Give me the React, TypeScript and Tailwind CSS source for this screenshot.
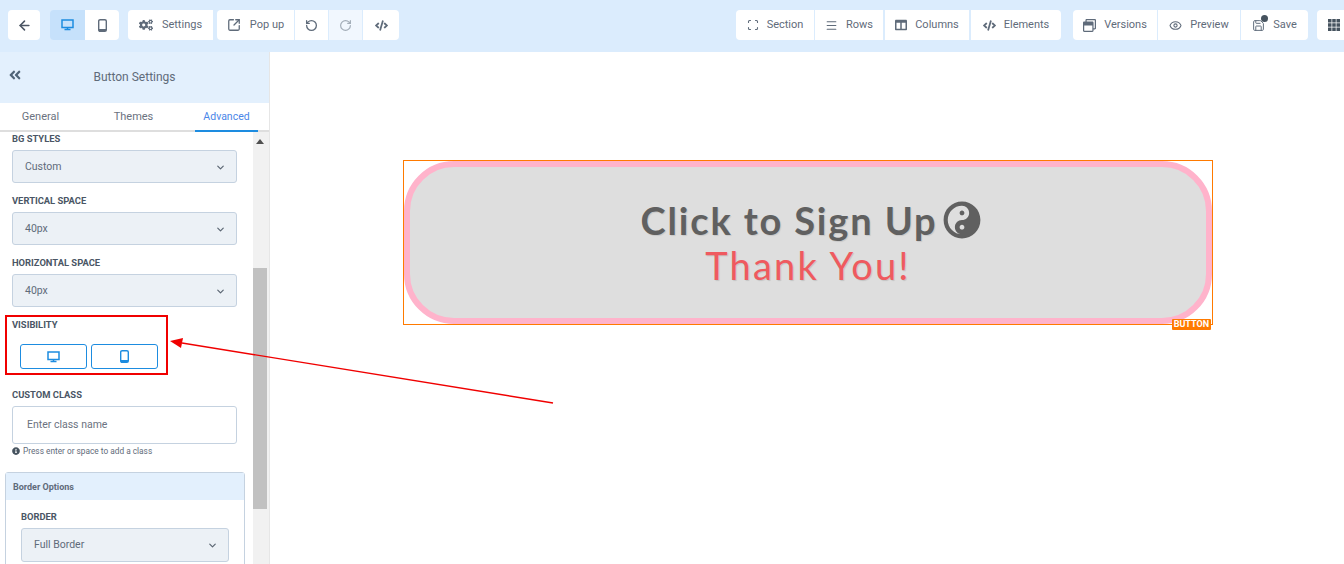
import type { ReactNode } from "react";
import { ArrowLeft, ChevronDown, Eye, Menu, RotateCcw, RotateCw, Save, Scan, SquareArrowOutUpRight } from "lucide-react";
import { FaAngleDoubleLeft, FaCode, FaCogs, FaColumns, FaInfoCircle, FaRegWindowRestore, FaYinYang } from "react-icons/fa";
import { TfiLayoutGrid3Alt } from "react-icons/tfi";

function DesktopIcon({ className = "" }: { className?: string }) {
  return (
    <svg width="13" height="12" viewBox="0 0 13 12" className={className}>
      <path d="M1 1h11v7.5H1z" fill="none" stroke="currentColor" strokeWidth="1.5" />
      <path d="M3.5 10.5h6M6.5 9v1.5" stroke="currentColor" strokeWidth="1.5" />
    </svg>
  );
}

function PhoneIcon({ className = "" }: { className?: string }) {
  return (
    <svg width="9" height="13" viewBox="0 0 9 13" className={className}>
      <rect x="0.7" y="0.7" width="7.6" height="11.6" rx="1.4" fill="none" stroke="currentColor" strokeWidth="1.4" />
      <path d="M1 10h7v2H1z" fill="currentColor" />
    </svg>
  );
}

function ToolButton({ icon, label, width, className = "" }: { icon: ReactNode; label?: string; width: string; className?: string }) {
  return (
    <div className={`flex h-[30px] shrink-0 items-center justify-center gap-[8px] bg-white text-[11px] text-[#5f6b7a] ${width} ${className}`}>
      {icon}
      {label && <span>{label}</span>}
    </div>
  );
}

function TopBar() {
  return (
    <header className="flex h-[52px] shrink-0 items-center overflow-hidden bg-[#dbecfd] pb-[2px] pl-2">
      <ToolButton width="w-[32px]" className="rounded" icon={<ArrowLeft size={15} strokeWidth={2.5} className="text-[#4b5563]" />} />
      <div className="ml-[10px] flex shrink-0 overflow-hidden rounded">
        <ToolButton width="w-[35px]" className="!bg-[#c6e1fb]" icon={<DesktopIcon className="text-[#1d8ce0]" />} />
        <ToolButton width="w-[34px]" icon={<PhoneIcon className="text-[#5f6b7a]" />} />
      </div>
      <ToolButton width="w-[85px]" className="ml-[9px] !gap-[9px] rounded-l" icon={<FaCogs size={14} className="text-[#5f6b7a]" />} label="Settings" />
      <div className="ml-[4px] flex shrink-0 gap-px">
        <ToolButton width="w-[77px]" className="!gap-[9px] rounded-l" icon={<SquareArrowOutUpRight size={14} strokeWidth={2.2} />} label="Pop up" />
        <ToolButton width="w-[33px]" icon={<RotateCcw size={13} strokeWidth={2.4} />} />
        <ToolButton width="w-[33px]" className="!bg-[#f1f7fe] !text-[#a3adb8]" icon={<RotateCw size={13} strokeWidth={2.2} />} />
        <ToolButton width="w-[36px]" className="rounded-r" icon={<FaCode size={13} />} />
      </div>
      <div className="ml-[337px] flex shrink-0 gap-px">
        <ToolButton width="w-[78px]" className="rounded-l" icon={<Scan size={12} strokeWidth={2.2} />} label="Section" />
        <ToolButton width="w-[68px]" icon={<Menu size={13} strokeWidth={2} />} label="Rows" />
        <ToolButton width="w-[84px]" className="ml-px" icon={<FaColumns size={12} />} label="Columns" />
        <ToolButton width="w-[90px]" className="ml-px rounded-r" icon={<FaCode size={13} />} label="Elements" />
      </div>
      <div className="ml-[12px] flex shrink-0 gap-px">
        <ToolButton width="w-[84px]" className="rounded-l" icon={<FaRegWindowRestore size={13} />} label="Versions" />
        <ToolButton width="w-[82px]" icon={<Eye size={13} strokeWidth={2} />} label="Preview" />
        <ToolButton
          width="w-[67px]"
          className="rounded-r"
          icon={
            <span className="relative flex">
              <Save size={13} strokeWidth={1.8} />
              <span className="absolute -right-[3px] -top-[4px] h-[7px] w-[7px] rounded-full bg-[#46535f]" />
            </span>
          }
          label="Save"
        />
      </div>
      <ToolButton width="w-[34px]" className="ml-[9px] rounded-l" icon={<TfiLayoutGrid3Alt size={12} className="text-[#46535f]" />} />
    </header>
  );
}

function FieldLabel({ children, className = "" }: { children: ReactNode; className?: string }) {
  return <p className={`text-[9.4px] font-bold uppercase leading-[12px] text-[#4a5665] ${className}`}>{children}</p>;
}

function SelectBox({ value, className = "" }: { value: string; className?: string }) {
  return (
    <div className={`flex h-[33px] items-center justify-between rounded-[3px] border border-[#c5d2e0] bg-[#ecf1f6] pl-[12px] pr-[10px] pt-px text-[10.5px] text-[#5f6b7a] ${className}`}>
      <span>{value}</span>
      <ChevronDown size={11} strokeWidth={2.6} className="text-[#5b6673]" />
    </div>
  );
}

function Scrollbar() {
  return (
    <div className="flex w-[16px] shrink-0 flex-col items-center bg-[#f1f1f1] pr-[2px]">
      <svg width="8" height="5" viewBox="0 0 8 5" className="mt-[7px]">
        <path d="M4 0 8 5H0Z" fill="#505050" />
      </svg>
      <div className="mt-[124px] h-[241px] w-[14px] bg-[#c1c1c1]" />
    </div>
  );
}

function Sidebar() {
  return (
    <aside className="flex h-full w-[270px] shrink-0 flex-col border-r border-[#e6e6e6]">
      <div className="relative flex h-[51px] shrink-0 items-center justify-center bg-[#e3f0fd] pb-[2px] text-[12px] text-[#5f6b7a]">
        <FaAngleDoubleLeft size={14} className="absolute left-[8px] top-[16px] text-[#4f6478]" />
        Button Settings
      </div>
      <nav className="flex h-[29px] shrink-0 border-b-2 border-[#dedede] text-[11px] text-[#6b7280]">
        <span className="flex w-[81px] items-center justify-center pt-[1px]">General</span>
        <span className="flex w-[105px] items-center justify-center pt-[1px]">Themes</span>
        <span className="-mb-[2px] ml-[9px] flex w-[63px] items-center justify-center border-b-2 border-[#1d8ce0] pt-[1px] text-[10.5px] text-[#4a86e8]">Advanced</span>
      </nav>
      <div className="flex min-h-0 flex-1 overflow-hidden">
        <div className="min-w-0 flex-1 overflow-hidden">
          <div className="pl-[12px] pr-[16px] pt-px">
            <FieldLabel>BG Styles</FieldLabel>
            <SelectBox value="Custom" className="mt-[5px]" />
            <FieldLabel className="mt-[12px]">Vertical Space</FieldLabel>
            <SelectBox value="40px" className="mt-[5px]" />
            <FieldLabel className="mt-[12px]">Horizontal Space</FieldLabel>
            <SelectBox value="40px" className="mt-[5px]" />
          </div>
          <div className="ml-[5px] mt-[8px] h-[60px] w-[163px] border-2 border-[#f00000] pl-[5px] pt-[2px]">
            <FieldLabel>Visibility</FieldLabel>
            <div className="ml-[8px] mt-[13px] flex gap-[4px]">
              <div className="flex h-[25px] w-[67px] items-center justify-center rounded-[3px] border border-[#1d8ce0]">
                <DesktopIcon className="text-[#1d8ce0]" />
              </div>
              <div className="flex h-[25px] w-[67px] items-center justify-center rounded-[3px] border border-[#1d8ce0]">
                <PhoneIcon className="text-[#1d8ce0]" />
              </div>
            </div>
          </div>
          <div className="pl-[12px] pr-[16px] pt-[14px]">
            <FieldLabel>Custom Class</FieldLabel>
            <div className="mt-[5px] flex h-[38px] items-center rounded-[3px] border border-[#c5d2e0] bg-white pl-[14px] text-[10.5px] text-[#6b7280]">Enter class name</div>
            <p className="mt-px flex h-[12px] items-center gap-[3px] text-[8.3px] text-[#5f6b7a]">
              <FaInfoCircle size={8} className="text-[#46535f]" />
              Press enter or space to add a class
            </p>
          </div>
          <section className="ml-[5px] mr-[8px] mt-[15px] h-[120px] rounded-t-[3px] border border-[#c5d2e0]">
            <div className="flex h-[27px] items-center bg-[#e3f0fd] pl-[7px] pt-[2px] text-[9px] font-bold text-[#5f6b7a]">Border Options</div>
            <div className="px-[15px] pt-[11px]">
              <FieldLabel>Border</FieldLabel>
              <SelectBox value="Full Border" className="mt-[5px] !h-[34px] !pt-0" />
            </div>
          </section>
        </div>
        <Scrollbar />
      </div>
    </aside>
  );
}

function Canvas() {
  return (
    <main className="min-w-0 flex-1 bg-white pl-[133px] pt-[108px]">
      <div className="relative h-[165px] w-[810px] border border-[#ff7a00]">
        <div className="flex h-full w-full flex-col items-center justify-center rounded-[50px] border-[6px] border-[#ffb3cb] bg-[#dedede] font-['Lato',sans-serif]">
          <p className="flex items-center pl-[5px] text-[38px] font-bold leading-[44px] tracking-[1.85px] text-[#606060] [text-shadow:1px_1px_1px_rgba(0,0,0,0.1)]">
            Click to Sign Up
            <FaYinYang size={38} className="ml-[5px]" />
          </p>
          <p className="text-[38px] leading-[46px] tracking-[2.2px] text-[#ef5a5f] [text-shadow:1px_1px_1px_rgba(0,0,0,0.12)]">Thank You!</p>
        </div>
        <span className="absolute -bottom-[6px] right-[1px] rounded-[1px] bg-[#ff7a00] px-[2px] text-[9px] font-bold leading-[11px] text-white">BUTTON</span>
      </div>
    </main>
  );
}

export default function App() {
  return (
    <div className="relative flex h-[564px] w-[1344px] flex-col overflow-hidden bg-white font-['Roboto',sans-serif]">
      <TopBar />
      <div className="flex min-h-0 flex-1">
        <Sidebar />
        <Canvas />
      </div>
      {/* annotation arrow drawn over the screenshot */}
      <svg width="1344" height="564" className="pointer-events-none absolute left-0 top-0">
        <line x1="553" y1="403" x2="182" y2="343" stroke="#f00000" strokeWidth="1.4" />
        <path d="M170 341 183 338 181 348Z" fill="#f00000" />
      </svg>
    </div>
  );
}
